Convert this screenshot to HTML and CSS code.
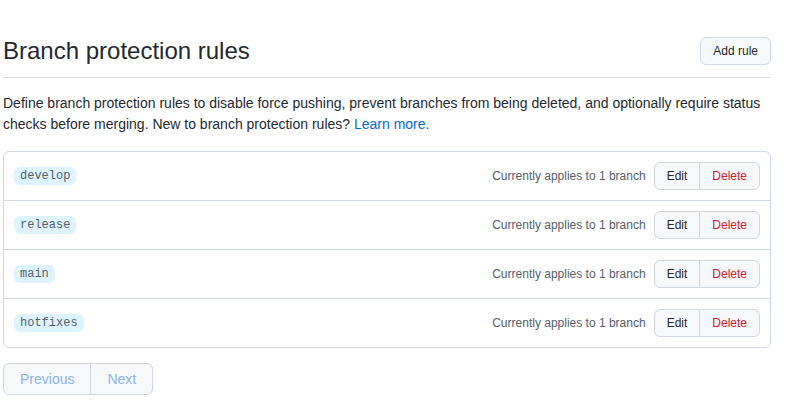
FILE: index.html
```html
<!DOCTYPE html>
<html lang="en">
<head>
<meta charset="utf-8">
<title>Branch protection rules</title>
<link rel="stylesheet" href="styles.css">
</head>
<body>
<div class="page">
  <div class="subhead">
    <h2 class="subhead-title">Branch protection rules</h2>
    <button class="btn btn-sm">Add rule</button>
  </div>
  <p class="desc">Define branch protection rules to disable force pushing, prevent branches from being deleted, and optionally require status checks before merging. New to branch protection rules? <a href="#" class="link">Learn more.</a></p>
  <div class="box">
    <div class="row">
      <span class="branch">develop</span>
      <div class="row-actions">
        <span class="applies">Currently applies to 1 branch</span>
        <div class="btn-group"><button class="btn btn-sm">Edit</button><button class="btn btn-sm danger">Delete</button></div>
      </div>
    </div>
    <div class="row">
      <span class="branch">release</span>
      <div class="row-actions">
        <span class="applies">Currently applies to 1 branch</span>
        <div class="btn-group"><button class="btn btn-sm">Edit</button><button class="btn btn-sm danger">Delete</button></div>
      </div>
    </div>
    <div class="row">
      <span class="branch">main</span>
      <div class="row-actions">
        <span class="applies">Currently applies to 1 branch</span>
        <div class="btn-group"><button class="btn btn-sm">Edit</button><button class="btn btn-sm danger">Delete</button></div>
      </div>
    </div>
    <div class="row">
      <span class="branch">hotfixes</span>
      <div class="row-actions">
        <span class="applies">Currently applies to 1 branch</span>
        <div class="btn-group"><button class="btn btn-sm">Edit</button><button class="btn btn-sm danger">Delete</button></div>
      </div>
    </div>
  </div>
  <nav class="pagination">
    <span class="page-btn">Previous</span><span class="page-btn">Next</span>
  </nav>
</div>
</body>
</html>
```

FILE: styles.css
```css
html, body {
  margin: 0;
  padding: 0;
  background: #ffffff;
}
body {
  font-family: "Liberation Sans", Arial, sans-serif;
  font-size: 14px;
  line-height: 1.5;
  color: #24292f;
}
.page {
  width: 768px;
  margin-left: 3px;
  padding-top: 33px;
}
.subhead {
  display: flex;
  align-items: center;
  justify-content: space-between;
  padding-bottom: 8px;
  border-bottom: 1px solid #d8dee4;
}
.subhead-title {
  margin: 0;
  font-size: 24px;
  font-weight: 400;
  line-height: 36px;
  color: #24292f;
}
.btn {
  font-family: "Liberation Sans", Arial, sans-serif;
  background: #f6f8fa;
  color: #24292f;
  border: 1px solid #d0d7de;
  border-radius: 6px;
  cursor: pointer;
}
.btn-sm {
  font-size: 12px;
  height: 28px;
  padding: 0 12px;
  line-height: 26px;
}
.desc {
  margin: 15px 0 16px;
  line-height: 21px;
}
.link {
  color: #0969da;
  text-decoration: none;
}
.box {
  border: 1px solid #d0d7de;
  border-radius: 6px;
}
.row {
  display: flex;
  align-items: center;
  justify-content: space-between;
  padding: 10px;
  height: 28px;
}
.row + .row {
  border-top: 1px solid #d0d7de;
}
.branch {
  font-family: "Liberation Mono", "DejaVu Sans Mono", monospace;
  font-size: 12px;
  line-height: 18px;
  color: #57606a;
  background: #ddf4ff;
  border-radius: 6px;
  padding: 0 6px;
}
.row-actions {
  display: flex;
  align-items: center;
  gap: 8px;
}
.applies {
  font-size: 12px;
  color: #57606a;
}
.btn-group {
  display: flex;
}
.btn-group .btn {
  border-radius: 0;
}
.btn-group .btn:first-child {
  border-radius: 6px 0 0 6px;
}
.btn-group .btn:last-child {
  border-radius: 0 6px 6px 0;
  margin-left: -1px;
}
.danger {
  color: #cf222e;
}
.pagination {
  display: flex;
  margin-top: 15px;
}
.page-btn {
  height: 30px;
  line-height: 30px;
  padding: 0 16px;
  font-size: 14px;
  color: #8cb4ec;
  background: #f6f8fa;
  border: 1px solid #d0d7de;
}
.page-btn:first-child {
  border-radius: 6px 0 0 6px;
}
.page-btn:last-child {
  border-radius: 0 6px 6px 0;
  margin-left: -1px;
}
```
